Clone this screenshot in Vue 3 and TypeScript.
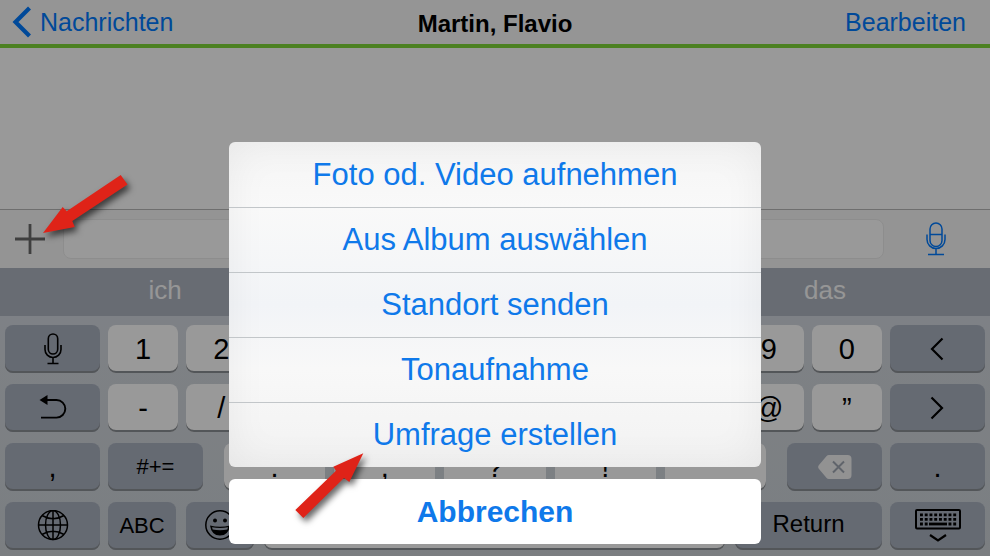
<script setup lang="ts">
import { ref } from 'vue'

const message = ref('')
const suggestions = ['ich', '', 'das']
const digits = ['1', '2', '', '', '', '', '', '', '9', '0']
const symbols = ['-', '/', '', '', '', '', '', '', '@', '”']
const punctuation = ['.', ',', '?', '!', '']
const actions = [
  'Foto od. Video aufnehmen',
  'Aus Album auswählen',
  'Standort senden',
  'Tonaufnahme',
  'Umfrage erstellen',
]
</script>

<template>
  <div class="screen">
    <header class="navbar">
      <a class="nav-link back" href="#">
        <svg width="20" height="32" viewBox="0 0 20 32" aria-hidden="true">
          <path d="M17.5 2 3.500 16l14 14" fill="none" stroke="currentColor" stroke-width="4.200" />
        </svg>
        <span>Nachrichten</span>
      </a>
      <h1 class="title">Martin, Flavio</h1>
      <a class="nav-link edit" href="#">Bearbeiten</a>
    </header>

    <main class="messages"></main>

    <form class="composer" @submit.prevent>
      <button class="plain" type="button" aria-label="Anhang">
        <svg width="30" height="30" viewBox="0 0 30 30" aria-hidden="true">
          <path d="M15 0v30M0 15h30" stroke="#6a6a6a" stroke-width="2.800" />
        </svg>
      </button>
      <input v-model="message" class="field" type="text" aria-label="Nachricht" />
      <button class="plain dictate" type="button" aria-label="Diktieren">
        <svg width="20" height="34" viewBox="0 0 20 34" fill="none" stroke="currentColor" stroke-width="1.500" aria-hidden="true">
          <rect x="4" y="1" width="12" height="23.500" rx="6" />
          <path d="M4 12.500h12M1 12.500v5a9 9 0 0 0 18 0v-5M10 26.500v6M2 32.500h16" />
        </svg>
      </button>
    </form>

    <div class="suggestions">
      <button v-for="(word, i) in suggestions" :key="i" class="plain suggestion" type="button">{{ word }}</button>
    </div>

    <div class="keyboard">
      <div class="row grid-row">
        <button class="key dark" type="button" aria-label="Diktieren">
          <svg width="18" height="32" viewBox="0 0 18 32" fill="none" stroke="#000" stroke-width="1.600" aria-hidden="true">
            <rect x="4.300" y="1" width="9.400" height="20" rx="4.700" />
            <path d="M1 12v4.500a8 8 0 0 0 16 0V12M9 24.500V30.500M3.500 30.500h11" />
          </svg>
        </button>
        <button v-for="(d, i) in digits" :key="i" class="key" type="button">{{ d }}</button>
        <button class="key dark" type="button" aria-label="Zurück">
          <svg width="14" height="24" viewBox="0 0 14 24" aria-hidden="true">
            <path d="M12.500 1.500 2 12l10.500 10.500" fill="none" stroke="#000" stroke-width="2.200" />
          </svg>
        </button>
      </div>
      <div class="row grid-row">
        <button class="key dark" type="button" aria-label="Widerrufen">
          <svg width="28" height="26" viewBox="0 0 28 26" aria-hidden="true">
            <path d="M7 5h10.500a8.800 8.800 0 0 1 0 17.600H2" fill="none" stroke="#000" stroke-width="1.900" />
            <path d="M.5 5 8.500 0v10z" />
          </svg>
        </button>
        <button v-for="(s, i) in symbols" :key="i" class="key" type="button">{{ s }}</button>
        <button class="key dark" type="button" aria-label="Vor">
          <svg width="14" height="24" viewBox="0 0 14 24" aria-hidden="true">
            <path d="M1.500 1.500 12 12 1.500 22.500" fill="none" stroke="#000" stroke-width="2.200" />
          </svg>
        </button>
      </div>
      <div class="row">
        <button class="key dark side" type="button">,</button>
        <button class="key dark side small" type="button">#+=</button>
        <div class="punctuation">
          <button v-for="(p, i) in punctuation" :key="i" class="key" type="button">{{ p }}</button>
        </div>
        <button class="key dark side" type="button" aria-label="Löschen">
          <svg width="34" height="24" viewBox="0 0 34 24" aria-hidden="true">
            <path d="M11 0h18.500a4 4 0 0 1 4 4v16a4 4 0 0 1-4 4H11q-1.500 0-2.600-1.200L1 14q-1.700-2 0-4L8.400 1.200Q9.500 0 11 0z" fill="#f4f4f4" />
            <path d="m15 6.500 11 11m0-11-11 11" stroke="#a0a7b3" stroke-width="2" />
          </svg>
        </button>
        <button class="key dark side" type="button">.</button>
      </div>
      <div class="row">
        <button class="key dark side" type="button" aria-label="Sprache">
          <svg width="32" height="32" viewBox="0 0 32 32" fill="none" stroke="#000" stroke-width="1.500" aria-hidden="true">
            <circle cx="16" cy="15" r="14.500" />
            <ellipse cx="16" cy="15" rx="7.500" ry="14.500" />
            <path d="M16 .5v29M1.500 15h29M5 5.500q11 6.500 22 0M5 24.500q11-6.500 22 0" />
          </svg>
        </button>
        <button class="key dark mode label" type="button">ABC</button>
        <div class="space-group">
          <button class="key dark mode" type="button" aria-label="Emoji">
            <svg width="32" height="32" viewBox="0 0 32 32" aria-hidden="true">
              <circle cx="16" cy="15" r="14.200" fill="none" stroke="#000" stroke-width="1.500" />
              <circle cx="11" cy="10.500" r="2" />
              <circle cx="21" cy="10.500" r="2" />
              <path d="M6 15.500q10 2.500 20 0-1.500 10-10 10t-10-10z" />
              <path d="M8 17.300q8 1.600 16 0l-.7 2.200q-7.300 1.500-14.600 0z" fill="#a9b1c0" />
            </svg>
          </button>
          <button class="key space" type="button" aria-label="Leerzeichen"></button>
          <button class="key dark return" type="button">Return</button>
        </div>
        <button class="key dark side" type="button" aria-label="Tastatur ausblenden">
          <svg width="46" height="34" viewBox="0 0 46 34" fill="none" stroke="#000" aria-hidden="true">
            <rect x="1" y="1" width="44" height="18.500" rx="1" stroke-width="2" />
            <path d="M5 5.800h36.200M5 10.400h36.200" stroke-width="2.800" stroke-dasharray="2.900 1.850" />
            <path d="M5 15h7.700M33.500 15h7.700" stroke-width="2.800" stroke-dasharray="2.900 1.850" />
            <path d="M14 15h18" stroke-width="2.800" />
            <path d="m15 26 8 5.500 8-5.500" stroke-width="2.200" />
          </svg>
        </button>
      </div>
    </div>

    <div class="backdrop">
      <div class="sheet" role="dialog" aria-label="Anhang">
        <div class="actions">
          <button v-for="a in actions" :key="a" class="action" type="button">{{ a }}</button>
        </div>
        <button class="action cancel" type="button">Abbrechen</button>
      </div>
    </div>

    <svg class="pointer pointer-plus" width="100" height="72" viewBox="0 0 100 72" aria-hidden="true">
      <path d="M3 63 22.700 37l4 4.300L80.700 5l6.800 9.500-55.200 36.500 2.500 6z" fill="#df2318" />
    </svg>
    <svg class="pointer pointer-poll" width="84" height="80" viewBox="0 0 84 80" aria-hidden="true">
      <path d="M73.300 3.300 43.300 16.700l2.700 4L5.300 60l8 8L54 28l5.300 4z" fill="#df2318" />
    </svg>
  </div>
</template>

<style>
body {
  margin: 0;
}
</style>

<style scoped>
.screen {
  position: relative;
  display: flex;
  flex-direction: column;
  min-height: 100vh;
  overflow: hidden;
  background: #fff;
  font-family: "Liberation Sans", Arial, sans-serif;
  color: #000;
}

button {
  margin: 0;
  padding: 0;
  border: 0;
  font: inherit;
  color: inherit;
}

svg {
  display: block;
  flex: none;
}

.navbar {
  display: grid;
  grid-template-columns: 1fr auto 1fr;
  align-items: center;
  height: 44px;
  padding: 0 12px;
  border-bottom: 4px solid #7fd83a;
  background: #f8f8f8;
}

.nav-link {
  color: #007aff;
  font-size: 25px;
  line-height: 32px;
  text-decoration: none;
}

.back {
  display: flex;
  align-items: center;
  gap: 8px;
}

.edit {
  justify-self: end;
  padding-right: 12px;
}

.title {
  margin: 0;
  padding-top: 4px;
  font-size: 24px;
  line-height: 32px;
}

.messages {
  flex: 1;
}

.composer {
  display: flex;
  align-items: center;
  gap: 18px;
  height: 58px;
  padding: 0 44px 0 15px;
  border-top: 1px solid #b8b8b8;
  background: #f7f7f7;
}

.plain {
  background: none;
}

.field {
  flex: 1;
  min-width: 0;
  box-sizing: border-box;
  height: 40px;
  padding: 0 12px;
  border: 1px solid #ececec;
  border-radius: 8px;
  background: #fff;
  font: inherit;
  font-size: 24px;
}

.dictate {
  margin-left: 24px;
  color: #007aff;
}

.suggestions {
  display: grid;
  grid-template-columns: repeat(3, 1fr);
  height: 48px;
  background: #adb4c0;
}

.suggestion {
  padding-bottom: 4px;
  color: #fafafa;
  font-size: 26px;
}

.keyboard {
  display: flex;
  flex-direction: column;
  gap: 11px;
  padding: 9px 5px 6px;
  background: linear-gradient(#d3d8df, #cdd3d8);
}

.row {
  display: flex;
  gap: 8px;
}

.grid-row {
  display: grid;
  grid-template-columns: 95px repeat(10, 1fr) 95px;
}

.key {
  display: flex;
  align-items: center;
  justify-content: center;
  min-width: 0;
  height: 48px;
  border-radius: 8px;
  background: #fff;
  box-shadow: inset 0 -2px 0 #8b8f94;
  font-size: 29px;
}

.dark {
  background: #a9b1bf;
}

.side {
  flex: none;
  width: 95px;
}

.small {
  font-size: 22px;
}

.mode {
  flex: none;
  width: 68px;
}

.label {
  font-size: 22px;
}

.punctuation {
  display: grid;
  grid-template-columns: repeat(5, 1fr);
  flex: 1;
  gap: 9px;
  padding: 0 13px;
}

.space-group {
  display: flex;
  flex: 1;
  gap: 10px;
  padding-left: 2px;
}

.space {
  flex: 1;
}

.return {
  flex: none;
  width: 147px;
  padding-bottom: 4px;
  font-size: 24px;
}

.backdrop {
  position: absolute;
  inset: 0;
  display: flex;
  align-items: flex-end;
  justify-content: center;
  padding: 12px;
  background: rgba(0, 0, 0, 0.4);
}

.sheet {
  display: flex;
  flex-direction: column;
  gap: 12px;
  width: 532px;
}

.actions {
  overflow: hidden;
  border-radius: 6px;
  background: linear-gradient(#f5f5f5, #f9f9f9 20%, #f2f4f7 50%, #f8f8f8 70%, #f2f2f2);
  box-shadow: inset 0 0 40px rgba(0, 0, 0, 0.06);
}

.action {
  box-sizing: border-box;
  display: block;
  width: 100%;
  height: 65px;
  background: none;
  color: #0f79ea;
  font-size: 31px;
}

.action + .action {
  border-top: 1px solid #c2c6c9;
}

.cancel {
  border-radius: 6px;
  background: #fff;
  font-size: 30px;
  font-weight: bold;
}

.pointer {
  position: absolute;
  filter: drop-shadow(3px 4px 3px rgba(0, 0, 0, 0.6));
}

.pointer-plus {
  left: 40px;
  top: 170px;
}

.pointer-poll {
  left: 290px;
  top: 450px;
}
</style>
